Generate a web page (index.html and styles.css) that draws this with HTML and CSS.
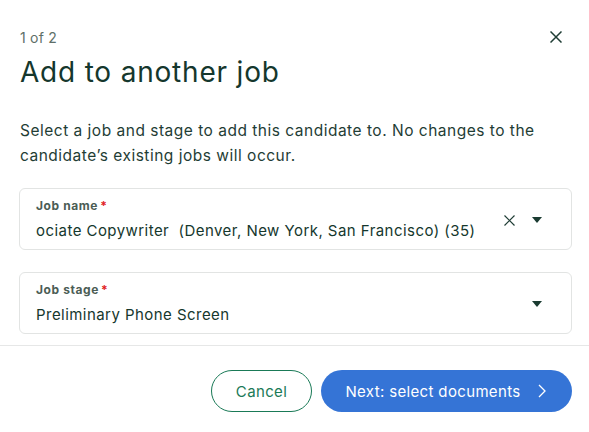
FILE: index.html
```html
<!DOCTYPE html>
<html lang="en">
<head>
    <meta charset="UTF-8">
    <meta name="viewport" content="width=device-width, initial-scale=1.0">
    <title>Add to another job</title>
    <link rel="stylesheet" href="styles.css">
</head>
<body>
    <div class="modal">
        <div class="modal-body">
            <div class="header">
                <div>
                    <p class="step">1 of 2</p>
                    <h1>Add to another job</h1>
                </div>
                <button class="close" aria-label="Close">
                    <svg width="12" height="12" viewBox="0 0 12 12"><path d="M0.5 0.5 L11.5 11.5 M11.5 0.5 L0.5 11.5" stroke="#1f3d35" stroke-width="1.5" fill="none"/></svg>
                </button>
            </div>
            <p class="intro">Select a job and stage to add this candidate to. No changes to the candidate’s existing jobs will occur.</p>

            <div class="field">
                <div class="field-text">
                    <label>Job name<span class="req">*</span></label>
                    <div class="value">ociate Copywriter&nbsp; (Denver, New York, San Francisco) (35)</div>
                </div>
                <div class="field-icons">
                    <svg class="clear" width="11" height="11" viewBox="0 0 11 11"><path d="M0.5 0.5 L10.5 10.5 M10.5 0.5 L0.5 10.5" stroke="#1f3d35" stroke-width="1.2" fill="none"/></svg>
                    <svg class="caret" width="10" height="6" viewBox="0 0 10 6"><path d="M0 0 H10 L5 6 Z" fill="#1a3b31"/></svg>
                </div>
            </div>

            <div class="field">
                <div class="field-text">
                    <label>Job stage<span class="req">*</span></label>
                    <div class="value">Preliminary Phone Screen</div>
                </div>
                <div class="field-icons">
                    <svg class="caret" width="10" height="6" viewBox="0 0 10 6"><path d="M0 0 H10 L5 6 Z" fill="#1a3b31"/></svg>
                </div>
            </div>
        </div>

        <div class="footer">
            <button class="btn btn-secondary">Cancel</button>
            <button class="btn btn-primary">Next: select documents
                <svg width="8" height="14" viewBox="0 0 8 14"><path d="M1 1 L7 7 L1 13" stroke="#fff" stroke-width="1.3" fill="none"/></svg>
            </button>
        </div>
    </div>
</body>
</html>
```
FILE: styles.css
```css
body {
    margin: 0;
    background-color: #fff;
    font-family: Inter, "Noto Sans", sans-serif;
    color: #1a3b31;
}

.modal {
    width: 589px;
}

.modal-body {
    padding: 28px 17px 11px 19px;
}

.header {
    display: flex;
    justify-content: space-between;
    align-items: flex-start;
}

.step {
    margin: 0;
    font-size: 14px;
    line-height: 20px;
    color: #5e6f68;
    padding-left: 1px;
    letter-spacing: 0.2px;
}

h1 {
    margin: 6px 0 0;
    font-size: 28px;
    line-height: 36px;
    font-weight: 400;
    color: #15372d;
    padding-left: 1px;
    letter-spacing: 0.8px;
}

.close {
    background: none;
    border: none;
    padding: 0;
    margin: 3px 10px 0 0;
    cursor: pointer;
}

.intro {
    margin: 28px 0 20px;
    padding-left: 1px;
    font-size: 15.5px;
    line-height: 25px;
    color: #1f3d35;
    letter-spacing: 0.5px;
}

.field {
    display: flex;
    align-items: center;
    justify-content: space-between;
    border: 1px solid #e2e4e3;
    border-radius: 6px;
    padding: 9px 29px 7px 16px;
    margin-bottom: 22px;
}

.field:last-child {
    margin-bottom: 0;
}

.field-text {
    min-width: 0;
}

label {
    display: block;
    font-size: 12px;
    line-height: 16px;
    font-weight: 700;
    color: #4b5d55;
    letter-spacing: 0.6px;
}

.req {
    color: #e0201e;
    margin-left: 2px;
}

.value {
    margin-top: 6px;
    font-size: 15px;
    line-height: 22px;
    color: #15372d;
    white-space: nowrap;
    letter-spacing: 0.45px;
}

.field-icons {
    display: flex;
    align-items: center;
    gap: 17px;
}

.footer {
    border-top: 1px solid #e6e7e7;
    display: flex;
    justify-content: flex-end;
    gap: 9px;
    padding: 24px 17px 20px 0;
}

.btn {
    height: 42px;
    border-radius: 21px;
    font-family: Inter, "Noto Sans", sans-serif;
    font-size: 15px;
    letter-spacing: 0.35px;
    cursor: pointer;
}

.btn-secondary {
    width: 101px;
    background: #fff;
    border: 1px solid #1a7a57;
    color: #1a7a57;
}

.btn-primary {
    width: 251px;
    background-color: #3574d6;
    border: none;
    color: #fff;
    display: flex;
    align-items: center;
    justify-content: center;
    gap: 17px;
    padding-left: 4px;
}
```
